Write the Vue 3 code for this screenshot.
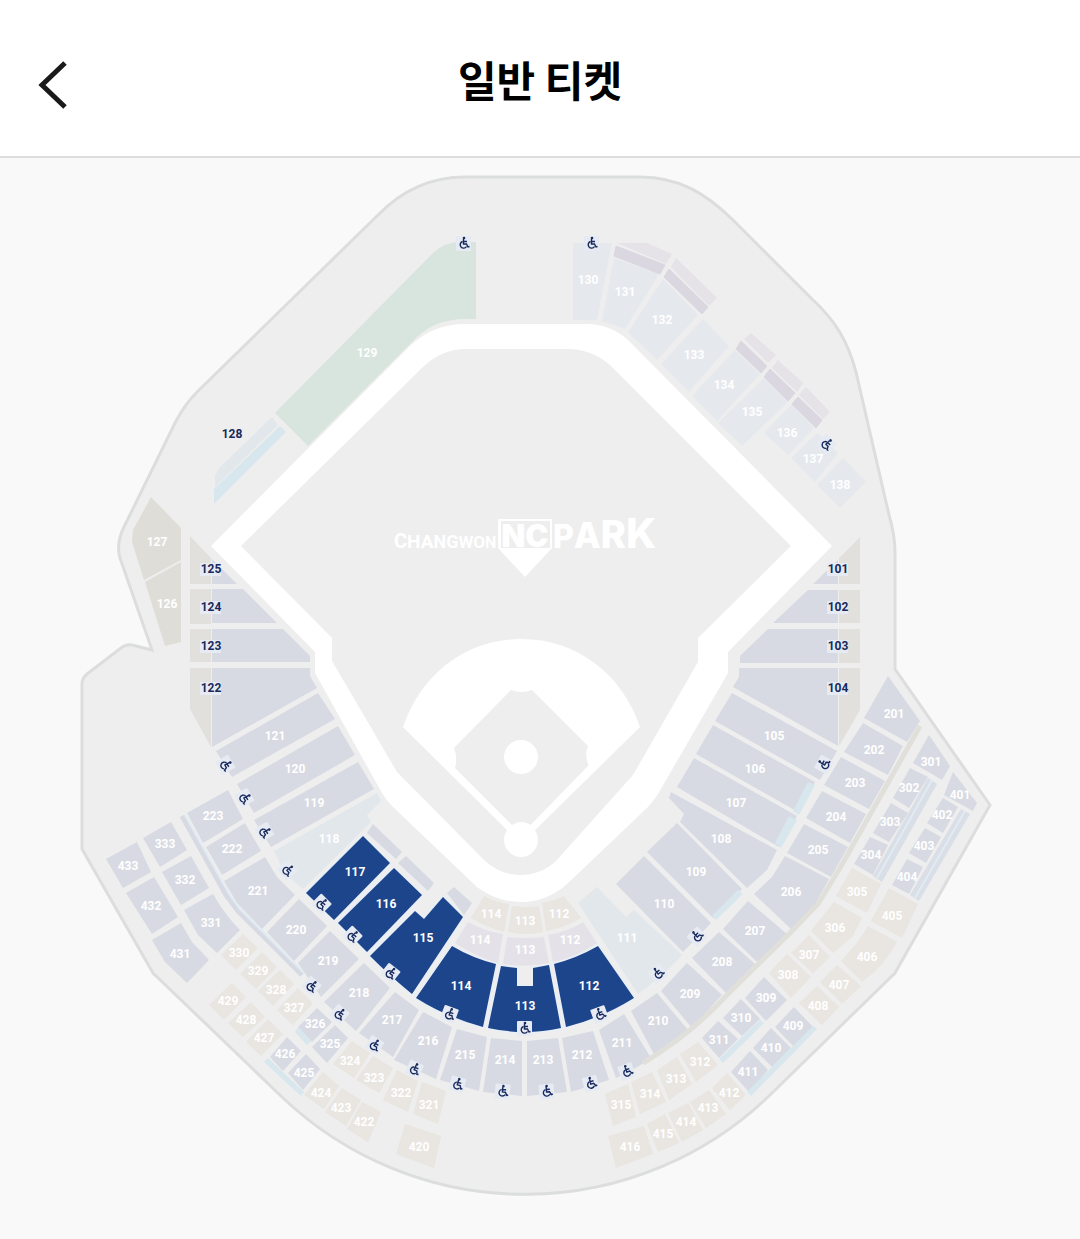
<template>
  <div class="page">
    <header class="topbar">
      <button class="back" type="button" aria-label="뒤로">
        <svg viewBox="0 0 32 52" aria-hidden="true">
          <path d="M29 5L6 27L29 49" />
        </svg>
      </button>
      <h1 class="title">일반 티켓</h1>
    </header>

    <main class="map">
      <svg class="stadium" viewBox="0 158 1080 1081" role="img" aria-label="CHANGWON NC PARK">
        <!-- stadium outline -->
        <path
          class="outline"
          d="M465 177H640C680 177 706 194 732 219L812 299C836 321 848 342 856 372L889 515Q895 535 895 553V669L990 805L895 973L770 1095A352 352 0 0 1 283 1098L153 973L82 849V684Q82 678 87 674L121 648Q126 644 132 645L152 650L120 558Q116 545 123 529L176 421Q185 404 198 391L378 215Q415 177 465 177Z"
        />

        <!-- warning track and infield -->
        <path
          class="white"
          fill-rule="evenodd"
          d="M465 324H587Q609 324 627 339L832 546L728 652V673L658 794Q654 800 648 807L566 885Q546 902 521 902Q497 902 477 887L393 807Q386 800 382 793L315 673V652L211 546L410 346Q433 324 465 324ZM465 349Q443 349 424 366L241 546L332 638V661L397 772L484 860Q500 875 520 875Q541 875 556 861L633 775L698 662V638L791 546L611 366Q592 349 568 349Z"
        />
        <path class="white" d="M403 727C421 674 466 639 521 639C577 639 622 674 640 727L521 844Z" />
        <path class="grass" d="M511 690Q521 694 532 690L588 746Q584 755 589 766L531 825Q521 819 512 825L455 768Q458 758 454 748Z" />
        <path class="foul" d="M450 768L514 832M593 765L528 832" />
        <circle class="white" cx="521" cy="757" r="17" />
        <circle class="white" cx="521" cy="840" r="17" />

        <!-- park logo -->
        <g class="logo">
          <text x="394" y="548">
            <tspan v-for="(c, i) in 'CHANGWON'" :key="i" :font-size="20 - Math.round(i / 2)">{{ c }}</tspan>
          </text>
          <path class="white" d="M498 519H552V548L525 577L498 548Z" />
          <path class="grass" d="M501 521H550V548H501Z" />
          <text class="mark" x="525" y="547" text-anchor="middle">NC</text>
          <text x="553" y="548">
            <tspan v-for="(c, i) in 'PARK'" :key="i" :font-size="32 + i * 3">{{ c }}</tspan>
          </text>
        </g>

        <!-- seats -->
        <path v-for="(s, i) in sections" :key="'s' + i" :class="s[3]" :d="s[4]" />
        <path v-for="(p, i) in parts" :key="'p' + i" :class="p[0]" :d="p[1]" />

        <!-- aisles and railings -->
        <path class="rail" d="M182 816L226 895L238 911L302 975" />
        <path class="rail-line" d="M185 815L229 894L240 909L304 973" />
        <path class="walkway" d="M920 726L840 868L818 904L790 933L727 995Q690 1035 643 1063" />
        <path class="rail-line" d="M932 780L877 878M965 811L915 898" />

        <rect v-for="m in marked" :key="'m' + m[0]" class="tag" :x="m[1] - 11" :y="m[2] - 6" width="21" height="13" />
        <text v-for="(s, i) in sections" :key="'t' + i" class="num" :x="s[1]" :y="s[2] + 4">{{ s[0] }}</text>
        <text v-for="m in marked" :key="'n' + m[0]" class="num dark" :x="m[1]" :y="m[2] + 4">{{ m[0] }}</text>
        <text class="num dark" x="232" y="438">128</text>

        <!-- wheelchair seats -->
        <g v-for="(w, i) in wheelchairs" :key="'w' + i" :transform="`translate(${w[0]} ${w[1]}) rotate(${w[2]})`">
          <rect class="badge" x="-8" y="-7" width="15" height="15" rx="1" />
          <circle class="head" cx="0" cy="-5" r="1.3" />
          <path class="chair" d="M-0.5 -4L-0.5 1H2.5L4 4L5.5 3.5M-0.5 -1.5H3M-1.5 -1.5A3.4 3.4 0 1 0 2.5 3.5" />
        </g>
      </svg>
    </main>
  </div>
</template>

<script setup>
// [class, path]
const parts = [
  ["pool", "M272 417L278 425L215 487V475L220 467Z"],
  ["cyan", "M280 426L286 432L214 504V489Z"],
  ["lilac", "M617 243H647L672 254L666 264Z"],
  ["lilac", "M676 258L717 298L709 306L671 267Z"],
  ["lilac", "M751 333L776 355L768 363L744 339Z"],
  ["lilac", "M778 360L803 383L797 392L772 368Z"],
  ["lilac", "M806 387L830 412L823 419L799 395Z"],
  ["plum", "M616 246L665 265L660 274L614 256Z"],
  ["plum", "M669 269L708 307L702 314L664 277Z"],
  ["plum", "M741 341L767 366L761 373L736 349Z"],
  ["plum", "M770 369L795 393L788 401L764 377Z"],
  ["plum", "M798 397L822 420L816 428L792 404Z"],
  ["stone", "M190 536L211 558V584H190Z"],
  ["seat", "M212 559L237 584H212Z"],
  ["stone", "M190 589H211V624H190Z"],
  ["seat", "M212 589H243L277 623H212Z"],
  ["stone", "M190 629H211V662H190Z"],
  ["seat", "M212 629H283L310 656V662H212Z"],
  ["stone", "M190 668H211V747L190 709Z"],
  ["seat", "M212 668H310V676L317 688L212 747Z"],
  ["seat", "M838 560V584H813Z"],
  ["stone", "M860 537V584H839V558Z"],
  ["seat", "M808 590H838V623H773Z"],
  ["stone", "M839 590H860V623H839Z"],
  ["seat", "M768 629H838V663H740V656Z"],
  ["stone", "M839 629H860V663H839Z"],
  ["seat", "M739 668H838V746L733 687L739 677Z"],
  ["stone", "M839 668H860V710L839 746Z"],
  ["seat", "M373 824L402 852L396 859L367 833Z"],
  ["seat", "M406 856L434 883L428 891L398 863Z"],
  ["seat", "M454 887L472 903L464 915L447 893Z"],
  ["glass", "M928 778L937 784L882 882L873 876Z"],
  ["glass", "M961 809L970 814L919 901L910 895Z"],
  ["cyan", "M738 890L743 894L716 920L712 916Z"],
  ["cyan", "M789 816L797 820L781 848L775 843Z"],
  ["cyan", "M808 782L815 785L799 815L793 811Z"],
  ["cyan", "M298 1027L311 1041L307 1045L295 1032Z"],
  ["cyan", "M268 1058L304 1092L301 1096L264 1062Z"],
  ["cyan", "M760 1020L764 1023L723 1063L719 1059Z"],
  ["cyan", "M813 1026L817 1029L751 1096L747 1092Z"],
];

// [number, label x, label y, class, path]
const sections = [
  ["129", 367, 353, "green", "M476 242V319H465Q436 319 417 337L308 446L275 413L433 253Q445 242 460 242Z"],
  ["130", 588, 280, "sky", "M573 243H612L597 320H573Z"],
  ["131", 625, 292, "sky", "M614 258L659 274L625 329L602 321Z"],
  ["132", 662, 320, "sky", "M663 279L698 315L657 360L628 332Z"],
  ["133", 694, 355, "sky", "M703 319L729 346L689 392L661 364Z"],
  ["134", 724, 385, "sky", "M735 350L760 374L717 421L692 396Z"],
  ["135", 752, 412, "sky", "M764 378L788 402L742 446L718 423Z"],
  ["136", 787, 433, "sky", "M792 404L814 428L788 455L764 433Z"],
  ["137", 813, 459, "sky", "M817 433L838 453L815 482L791 458Z"],
  ["138", 840, 485, "sky", "M843 458L866 482L840 508L817 485Z"],
  ["127", 157, 542, "rock", "M151 497L181 528V560L144 580L132 542L133 530Z"],
  ["126", 167, 604, "rock", "M145 582L181 562V642L165 646Z"],
  ["121", 275, 736, "seat", "M318 693L335 719L232 777L216 751Z"],
  ["120", 295, 769, "seat", "M338 726L355 755L254 813L237 784Z"],
  ["119", 314, 803, "seat", "M358 762L374 789L271 847L254 820Z"],
  ["118", 329, 839, "pool", "M274 851L377 793L381 801L367 815L371 822L303 889L285 874Z"],
  ["117", 355, 872, "open", "M363 836L390 863L334 920L306 893Z"],
  ["116", 386, 904, "open", "M394 868L422 895L367 952L338 923Z"],
  ["115", 423, 938, "open", "M415 911L424 919L443 897L463 917L412 994Q391 977 370 956Z"],
  ["114", 461, 986, "open", "M452 946Q472 958 496 964L483 1027Q446 1017 416 998Z"],
  ["113", 525, 1006, "open", "M501 966L517 968V986H533V968L549 965L561 1028Q525 1036 488 1028Z"],
  ["112", 589, 986, "open", "M554 964Q577 958 598 946L634 998Q602 1018 566 1027Z"],
  ["114", 491, 914, "sand", "M484 896Q495 902 509 904L504 932Q486 927 471 918Z"],
  ["113", 525, 921, "sand", "M512 906Q525 908 539 906L543 932Q525 936 508 932Z"],
  ["112", 559, 914, "sand", "M542 903Q554 901 564 896L581 918Q565 928 546 931Z"],
  ["114", 480, 940, "mist", "M468 922Q484 931 503 934L498 963Q474 956 455 943Z"],
  ["113", 525, 950, "mist", "M507 937Q525 939 544 937L549 963Q525 968 503 964Z"],
  ["112", 570, 940, "mist", "M548 935Q567 932 583 922L597 943Q577 957 553 962Z"],
  ["111", 627, 938, "pool", "M597 887L626 917L634 910L682 955Q663 976 638 994L578 903Z"],
  ["110", 664, 904, "seat", "M616 884L644 856L711 923L683 952Z"],
  ["109", 696, 872, "seat", "M647 852L677 823L742 889L713 918Z"],
  ["108", 721, 839, "seat", "M671 792L777 850L767 870L747 888L680 822L684 814L669 798Z"],
  ["107", 736, 803, "seat", "M694 758L797 816L779 847L677 787Z"],
  ["106", 755, 769, "seat", "M713 725L815 782L798 812L696 754Z"],
  ["105", 774, 736, "seat", "M732 693L837 751L820 780L715 721Z"],
  ["201", 894, 714, "seat", "M888 676L920 721L907 742L864 718Z"],
  ["202", 874, 750, "seat", "M863 723L903 746L888 775L844 752Z"],
  ["203", 855, 783, "seat", "M841 757L885 781L869 809L824 785Z"],
  ["204", 836, 817, "seat", "M822 791L866 814L850 843L806 818Z"],
  ["205", 818, 850, "seat", "M804 824L848 847L831 877L787 853Z"],
  ["206", 791, 892, "seat", "M785 856L829 879L813 908L791 929L754 894L772 877Z"],
  ["207", 755, 931, "seat", "M748 901L787 934L757 962L723 929Z"],
  ["208", 722, 962, "seat", "M719 932L755 964L726 993L692 958Z"],
  ["209", 690, 994, "seat", "M687 963L722 995L692 1028L661 991Z"],
  ["210", 658, 1021, "seat", "M657 993L688 1030Q673 1045 655 1056L631 1011Z"],
  ["211", 622, 1043, "seat", "M624 1014L651 1058Q634 1070 616 1078L599 1030Z"],
  ["212", 582, 1055, "seat", "M593 1031L609 1080L571 1092L562 1038Z"],
  ["213", 543, 1060, "seat", "M527 1041L558 1038L567 1092L527 1096Z"],
  ["214", 505, 1060, "seat", "M491 1038L522 1041V1096L483 1092Z"],
  ["215", 465, 1055, "seat", "M457 1029L487 1037L479 1091L440 1080Z"],
  ["216", 428, 1041, "seat", "M423 1012L452 1027L436 1079L394 1060Z"],
  ["217", 392, 1020, "seat", "M395 992L419 1010L393 1057L359 1033Z"],
  ["218", 359, 993, "seat", "M364 963L390 988L356 1031L324 1002Z"],
  ["219", 328, 961, "seat", "M330 931L359 959L321 997L298 963Z"],
  ["220", 296, 930, "seat", "M299 899L327 926L294 961L267 932Z"],
  ["221", 258, 891, "seat", "M265 857L277 877L295 895L262 929L237 903L224 881Z"],
  ["222", 232, 849, "seat", "M245 823L261 851L222 875L206 847Z"],
  ["223", 213, 816, "seat", "M228 790L243 819L203 843L187 813Z"],
  ["333", 165, 844, "seat", "M171 822L187 850L160 867L143 838Z"],
  ["433", 128, 866, "seat", "M137 842L151 872L123 888L106 859Z"],
  ["332", 185, 880, "seat", "M191 856L209 888L181 905L162 872Z"],
  ["432", 151, 906, "seat", "M154 877L178 917L152 934L126 893Z"],
  ["331", 211, 923, "seat", "M213 894Q225 915 240 930L217 953L198 935L184 910Z"],
  ["431", 180, 954, "seat", "M181 923L192 942L209 960L187 983L165 962L152 940Z"],
  ["330", 239, 953, "sand", "M243 934L258 948L236 970L221 955Z"],
  ["329", 258, 971, "sand", "M262 952L277 967L256 989L240 974Z"],
  ["328", 276, 990, "sand", "M280 970L294 984L273 1006L258 991Z"],
  ["327", 294, 1008, "sand", "M298 988L313 1003L293 1025L277 1010Z"],
  ["326", 315, 1024, "seat", "M317 1008L332 1022L312 1042L298 1027Z"],
  ["325", 330, 1044, "seat", "M335 1025L348 1038L327 1063L312 1047Z"],
  ["324", 350, 1061, "sand", "M352 1041L370 1053L354 1078L333 1064Z"],
  ["323", 374, 1078, "sand", "M373 1056L393 1068L379 1093L356 1080Z"],
  ["322", 401, 1093, "sand", "M397 1070L418 1081L408 1112L383 1100Z"],
  ["321", 429, 1105, "sand", "M422 1082L446 1091L438 1124L413 1114Z"],
  ["429", 228, 1001, "sand", "M232 983L246 997L224 1020L209 1005Z"],
  ["428", 246, 1020, "sand", "M251 1002L265 1017L243 1037L228 1023Z"],
  ["427", 264, 1038, "sand", "M268 1019L283 1034L261 1056L246 1042Z"],
  ["426", 285, 1054, "seat", "M287 1037L301 1051L283 1071L270 1057Z"],
  ["425", 304, 1073, "seat", "M306 1054L320 1069L303 1090L288 1073Z"],
  ["424", 321, 1093, "sand", "M323 1072L339 1086L324 1109L304 1095Z"],
  ["423", 341, 1108, "sand", "M342 1088L361 1100L346 1126L325 1112Z"],
  ["422", 364, 1122, "sand", "M362 1102L381 1112L368 1142L347 1129Z"],
  ["420", 419, 1147, "sand", "M405 1124L441 1136L434 1168L396 1154Z"],
  ["301", 931, 762, "seat", "M929 735L950 766L942 780L913 763Z"],
  ["302", 909, 788, "seat", "M910 768L928 777L909 808L893 798Z"],
  ["303", 890, 822, "seat", "M891 803L908 813L889 842L873 833Z"],
  ["304", 871, 855, "seat", "M870 837L888 845L873 875L854 864Z"],
  ["305", 857, 892, "sand", "M852 868L881 884L867 913L836 896Z"],
  ["306", 835, 928, "sand", "M834 902L862 918L852 937L833 953L811 931Z"],
  ["307", 809, 955, "sand", "M809 935L830 957L813 973L791 953Z"],
  ["308", 788, 975, "sand", "M787 954L811 977L791 998L769 973Z"],
  ["309", 766, 998, "seat", "M764 977L787 1000L766 1021L745 998Z"],
  ["310", 741, 1018, "seat", "M741 999L760 1019L742 1036L723 1018Z"],
  ["311", 719, 1040, "seat", "M718 1021L738 1039L719 1058L702 1038Z"],
  ["312", 700, 1062, "sand", "M680 1054L698 1042L718 1065L696 1082Z"],
  ["313", 676, 1079, "sand", "M657 1070L677 1057L692 1084L669 1100Z"],
  ["314", 650, 1094, "sand", "M631 1082L652 1072L666 1102L640 1114Z"],
  ["315", 621, 1105, "sand", "M605 1094L628 1084L636 1117L613 1126Z"],
  ["401", 960, 795, "seat", "M953 772L977 803L973 811L944 795Z"],
  ["402", 942, 815, "seat", "M943 798L958 807L943 833L927 823Z"],
  ["403", 924, 846, "seat", "M925 828L941 837L926 863L909 853Z"],
  ["404", 907, 877, "seat", "M907 859L923 867L909 894L892 885Z"],
  ["405", 892, 916, "sand", "M889 888L918 904L902 938L871 921Z"],
  ["406", 867, 957, "sand", "M868 926L897 942Q885 965 862 982L841 961L857 943Z"],
  ["407", 839, 985, "sand", "M837 965L861 986L842 1004L820 982Z"],
  ["408", 818, 1006, "sand", "M817 986L839 1007L822 1025L799 1003Z"],
  ["409", 793, 1026, "seat", "M794 1007L814 1028L795 1048L775 1027Z"],
  ["410", 771, 1048, "seat", "M771 1028L791 1048L772 1067L753 1048Z"],
  ["411", 748, 1072, "seat", "M750 1051L768 1070L749 1092L731 1072Z"],
  ["412", 729, 1093, "sand", "M727 1073L746 1095L730 1110L712 1088Z"],
  ["413", 708, 1108, "sand", "M709 1090L726 1114L706 1128L690 1102Z"],
  ["414", 686, 1122, "sand", "M688 1103L703 1130L682 1142L668 1113Z"],
  ["415", 663, 1134, "sand", "M665 1114L679 1143L658 1152L647 1124Z"],
  ["416", 630, 1147, "sand", "M644 1126L653 1154L616 1168L608 1136Z"],
];

// numbers drawn on a light tag
const marked = [
  ["125", 211, 569],
  ["124", 211, 607],
  ["123", 211, 646],
  ["122", 211, 688],
  ["101", 838, 569],
  ["102", 838, 607],
  ["103", 838, 646],
  ["104", 838, 688],
];

// [x, y, rotation]
const wheelchairs = [
  [464, 243, 0],
  [592, 243, 0],
  [827, 444, 45],
  [226, 765, 60],
  [245, 798, 60],
  [265, 832, 60],
  [288, 870, 50],
  [322, 904, 45],
  [353, 936, 45],
  [391, 973, 38],
  [450, 1014, 20],
  [525, 1028, 0],
  [600, 1014, -20],
  [658, 973, -38],
  [697, 936, -45],
  [824, 764, -60],
  [312, 986, 42],
  [340, 1014, 40],
  [375, 1045, 32],
  [415, 1069, 25],
  [458, 1084, 15],
  [503, 1091, 5],
  [547, 1091, -5],
  [591, 1083, -15],
  [627, 1071, -20],
];
</script>

<style>
body {
  margin: 0;
  background: #f9f9f9;
}
</style>

<style scoped>
.page {
  font-family: "Noto Sans CJK KR", sans-serif;
}

.topbar {
  position: relative;
  display: flex;
  align-items: center;
  justify-content: center;
  height: 154px;
  padding-top: 2px;
  background: white;
  border-bottom: 2px solid #dcdddd;
}

.back {
  position: absolute;
  left: 36px;
  top: 58px;
  width: 32px;
  height: 52px;
  padding: 0;
  border: 0;
  background: none;
  cursor: pointer;
}

.back svg {
  display: block;
}

.back path {
  fill: none;
  stroke: #1a1a1a;
  stroke-width: 5px;
}

.title {
  margin: 0;
  font-size: 42px;
  font-weight: 700;
  line-height: 60px;
  color: black;
}

.stadium {
  display: block;
  width: 100%;
}

.outline {
  fill: #eeeeee;
  stroke: #dcdddd;
  stroke-width: 3px;
}

.white {
  fill: white;
}

.grass {
  fill: #eeeeee;
}

.foul {
  stroke: white;
  stroke-width: 6px;
}

.logo text {
  font-family: "Liberation Sans Narrow", "Roboto", sans-serif;
  font-weight: 700;
  fill: white;
}

.logo text:last-child {
  font-family: "Inter", sans-serif;
  font-weight: 800;
}

.logo .mark {
  font-family: "Inter", sans-serif;
  font-size: 31px;
  font-weight: 900;
}

.seat { fill: #d7dae2; }
.open { fill: #1d458c; stroke: #e8eff8; stroke-width: 3px; paint-order: stroke; }
.sand { fill: #e9e5e0; }
.stone { fill: #e2e0dc; }
.rock { fill: #dfddd8; }
.mist { fill: #e4e2e8; }
.pool { fill: #e1e7eb; }
.sky { fill: #e5e9ee; }
.plum { fill: #dbd7e0; stroke: #dbd7e0; stroke-width: 1px; }
.lilac { fill: #e5e2e8; }
.green { fill: #d7e5de; }
.cyan { fill: #d7e7ed; }
.glass { fill: #d9dee7; }

.rail {
  fill: none;
  stroke: #d7dae2;
  stroke-width: 5px;
}

.rail-line {
  fill: none;
  stroke: #e1ebf2;
  stroke-width: 2px;
}

.walkway {
  fill: none;
  stroke: #e1dfda;
  stroke-width: 5px;
}

.tag,
.badge {
  fill: #e6ebf3;
}

.num {
  font-family: "Liberation Sans Narrow", "Roboto", sans-serif;
  font-size: 12px;
  font-weight: 700;
  text-anchor: middle;
  fill: white;
}

.num.dark {
  fill: #17295c;
}

.head {
  fill: #17295c;
}

.chair {
  fill: none;
  stroke: #17295c;
  stroke-width: 1.4px;
}
</style>
